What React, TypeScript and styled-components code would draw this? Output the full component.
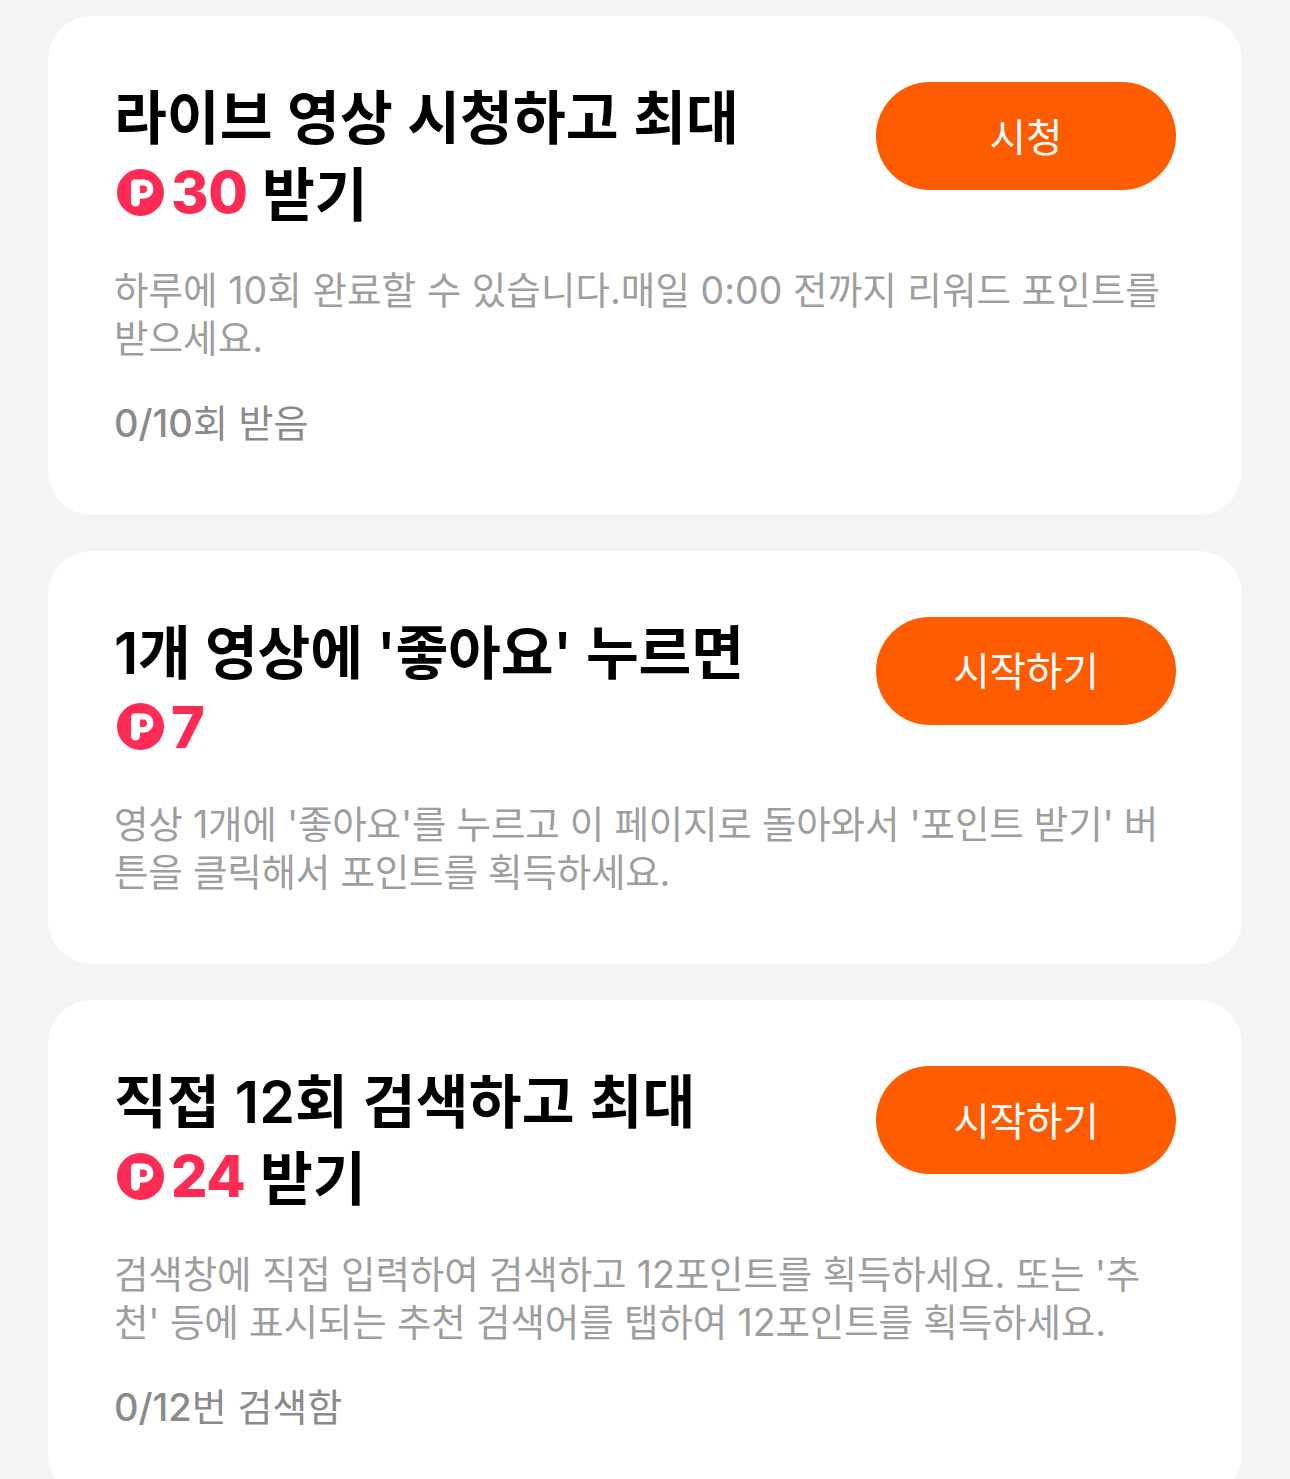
import React from "react";
import styled, { createGlobalStyle } from "styled-components";

const FONT_STACK = `Inter, "Noto Sans CJK KR", sans-serif`;

const GlobalStyle = createGlobalStyle`
  html, body {
    margin: 0;
    padding: 0;
    height: 1479px;
    overflow: hidden;
    background-color: #f4f4f4;
    font-family: ${FONT_STACK};
  }
`;

const Page = styled.div`
  display: flex;
  flex-direction: column;
  gap: 36px;
  padding: 16px 48px 0 48px;
`;

const Card = styled.div<{ $compact: boolean }>`
  background-color: #ffffff;
  border-radius: 44px;
  padding: 66px 66px ${(p) => (p.$compact ? "67px" : "68px")} 66px;
`;

const TopRow = styled.div`
  display: flex;
  justify-content: space-between;
  align-items: flex-start;
`;

const Title = styled.div<{ $tracking: number }>`
  width: 700px;
  margin-top: -1px;
  font-size: 57.4px;
  line-height: 74px;
  font-weight: 600;
  letter-spacing: ${(p) => p.$tracking}px;
  color: #000000;
`;

const Reward = styled.span`
  display: inline-flex;
  align-items: center;
  color: #fe2c55;
  font-weight: 800;
  letter-spacing: -0.5px;
`;

const Coin = styled.svg`
  width: 47px;
  height: 47px;
  margin: 0 7px 0 3px;
`;

const ActionButton = styled.div`
  flex: none;
  box-sizing: border-box;
  width: 300px;
  height: 108px;
  padding-bottom: 4px;
  border-radius: 54px;
  background-color: #ff5c00;
  color: #ffffff;
  font-size: 39.6px;
  display: flex;
  align-items: center;
  justify-content: center;
`;

const Description = styled.div<{ $tracking: number }>`
  margin-top: 35px;
  font-size: 37.5px;
  line-height: 48px;
  letter-spacing: ${(p) => p.$tracking}px;
  white-space: nowrap;
  color: #9e9e9e;
`;

const Progress = styled.div`
  margin-top: 36px;
  font-size: 38px;
  line-height: 48px;
  color: #8a8a8a;
`;

const ProgressCount = styled.span`
  font-weight: 500;
`;

function PointCoin() {
  return (
    <Coin viewBox="0 0 47 47">
      <circle cx="23.5" cy="23.5" r="23.5" fill="#fe2c55" />
      <path
        d="M14 14.500a4 4 0 0 1 4-4H27a9.500 9.500 0 0 1 0 19h-4v3.500a4.500 4.500 0 0 1-9 0Z"
        fill="#ffffff"
      />
      <path d="M23 16.500h3.250a3.750 3.750 0 0 1 0 7.500H23Z" fill="#fe2c55" />
    </Coin>
  );
}

type taskProps = {
  title: string;
  titleTracking: number;
  points: number;
  suffix?: string;
  button: string;
  description: React.ReactNode;
  descriptionTracking: number;
  count?: string;
  progress?: string;
};

function TaskCard(props: taskProps) {
  return (
    <Card $compact={!props.progress}>
      <TopRow>
        <Title $tracking={props.titleTracking}>
          {props.title}
          <br />
          <Reward>
            <PointCoin />
            {props.points}
          </Reward>
          {props.suffix && " " + props.suffix}
        </Title>
        <ActionButton>{props.button}</ActionButton>
      </TopRow>
      <Description $tracking={props.descriptionTracking}>
        {props.description}
      </Description>
      {props.progress && (
        <Progress>
          <ProgressCount>{props.count}</ProgressCount>
          {props.progress}
        </Progress>
      )}
    </Card>
  );
}

export default function App() {
  return (
    <Page>
      <GlobalStyle />
      <TaskCard
        title="라이브 영상 시청하고 최대"
        titleTracking={0.05}
        points={30}
        suffix="받기"
        button="시청"
        descriptionTracking={0.05}
        description={
          <>
            하루에 10회 완료할 수 있습니다.매일 0:00 전까지 리워드 포인트를
            <br />
            받으세요.
          </>
        }
        count="0/10"
        progress="회 받음"
      />
      <TaskCard
        title="1개 영상에 '좋아요' 누르면"
        titleTracking={-0.2}
        points={7}
        button="시작하기"
        descriptionTracking={-0.2}
        description={
          <>
            영상 1개에 '좋아요'를 누르고 이 페이지로 돌아와서 '포인트 받기' 버
            <br />
            튼을 클릭해서 포인트를 획득하세요.
          </>
        }
      />
      <TaskCard
        title="직접 12회 검색하고 최대"
        titleTracking={0.2}
        points={24}
        suffix="받기"
        button="시작하기"
        descriptionTracking={-0.13}
        description={
          <>
            검색창에 직접 입력하여 검색하고 12포인트를 획득하세요. 또는 '추
            <br />
            천' 등에 표시되는 추천 검색어를 탭하여 12포인트를 획득하세요.
          </>
        }
        count="0/12"
        progress="번 검색함"
      />
    </Page>
  );
}
